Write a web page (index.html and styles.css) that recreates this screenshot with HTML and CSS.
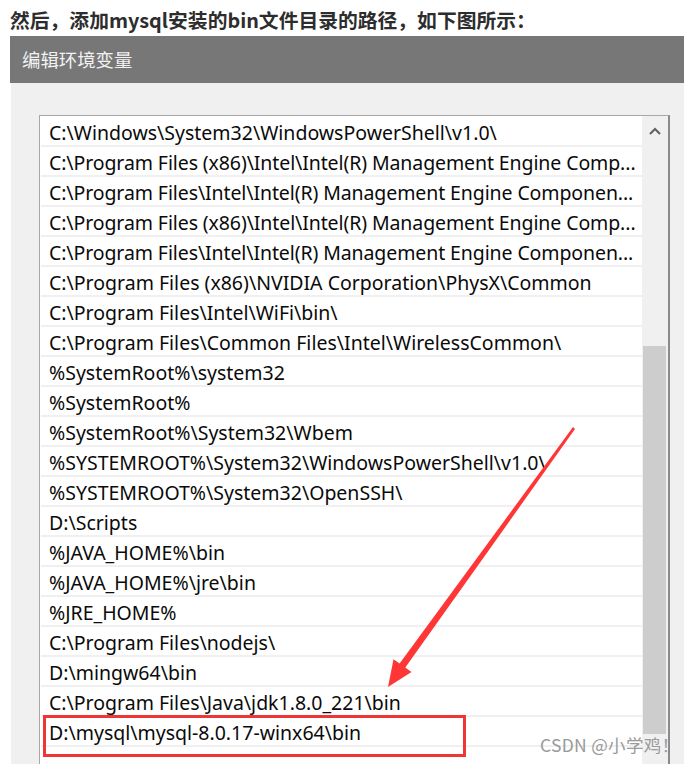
FILE: index.html
```html
<!DOCTYPE html>
<html lang="zh-CN">
<head>
<meta charset="utf-8">
<title>编辑环境变量</title>
<link rel="stylesheet" href="styles.css">
</head>
<body>
<div class="page">
  <p class="lead">然后，添加mysql安装的bin文件目录的路径，如下图所示：</p>
  <div class="dialog">
    <div class="titlebar">编辑环境变量</div>
    <div class="panel">
      <div class="listbox">
        <ul class="rows">
          <li>C:\Windows\System32\WindowsPowerShell\v1.0\</li>
          <li class="cut">C:\Program Files (x86)\Intel\Intel(R) Management Engine Comp...</li>
          <li class="cut">C:\Program Files\Intel\Intel(R) Management Engine Componen...</li>
          <li class="cut">C:\Program Files (x86)\Intel\Intel(R) Management Engine Comp...</li>
          <li class="cut">C:\Program Files\Intel\Intel(R) Management Engine Componen...</li>
          <li>C:\Program Files (x86)\NVIDIA Corporation\PhysX\Common</li>
          <li>C:\Program Files\Intel\WiFi\bin\</li>
          <li>C:\Program Files\Common Files\Intel\WirelessCommon\</li>
          <li>%SystemRoot%\system32</li>
          <li>%SystemRoot%</li>
          <li>%SystemRoot%\System32\Wbem</li>
          <li>%SYSTEMROOT%\System32\WindowsPowerShell\v1.0\</li>
          <li>%SYSTEMROOT%\System32\OpenSSH\</li>
          <li>D:\Scripts</li>
          <li>%JAVA_HOME%\bin</li>
          <li>%JAVA_HOME%\jre\bin</li>
          <li>%JRE_HOME%</li>
          <li>C:\Program Files\nodejs\</li>
          <li>D:\mingw64\bin</li>
          <li>C:\Program Files\Java\jdk1.8.0_221\bin</li>
          <li class="marked">D:\mysql\mysql-8.0.17-winx64\bin</li>
          <li></li>
        </ul>
        <div class="scrollbar">
          <div class="arrow-up">
            <svg width="12" height="8" viewBox="0 0 12 8"><path d="M1 7 L6 2 L11 7" fill="none" stroke="#606060" stroke-width="2"/></svg>
          </div>
          <div class="thumb"></div>
        </div>
      </div>
    </div>
  </div>
  <svg class="pointer" width="684" height="764" viewBox="0 0 684 764">
    <polygon points="573,427 575,429 405.3,667.6 411.5,672 388,687 393.5,659.2 399.6,663.6" fill="#ff3636"/>
  </svg>
  <div class="highlight"></div>
  <div class="watermark">CSDN @小学鸡！</div>
</div>
</body>
</html>
```
FILE: styles.css
```css
html, body {
  margin: 0;
  padding: 0;
  background: #ffffff;
  overflow: hidden;
}
.page {
  position: relative;
  width: 684px;
  height: 764px;
  overflow: hidden;
}
.lead {
  margin: 0;
  padding: 7px 0 0 10px;
  height: 29px;
  font-family: "Noto Sans CJK SC", "Noto Sans", sans-serif;
  font-weight: bold;
  font-size: 19.8px;
  line-height: 26px;
  color: #2d2d2d;
  white-space: nowrap;
}
.dialog {
  margin-left: 10px;
  width: 674px;
}
.titlebar {
  height: 47px;
  background: #777777;
  color: #f2f2f2;
  font-family: "Noto Sans CJK SC", sans-serif;
  font-size: 18.4px;
  line-height: 47px;
  padding-left: 12px;
}
.panel {
  background: #f0f0f0;
  margin-left: 1px;
  padding: 32px 15px 0 28px;
  height: 700px;
}
.listbox {
  display: flex;
  width: 628px;
  height: 680px;
  background: #ffffff;
  border-top: 1px solid #a8a8a8;
  border-left: 1px solid #a8a8a8;
  border-right: 2px solid #8a8a8a;
}
.rows {
  list-style: none;
  margin: 0;
  padding: 1px 0 0 1px;
  flex: 1;
  min-width: 0;
}
.rows li {
  height: 28px;
  border-bottom: 2px solid #f0f0f0;
  padding-left: 8px;
  font-family: "Noto Sans", "Open Sans", sans-serif;
  font-size: 19.5px;
  line-height: 31px;
  color: #0a0a0a;
  white-space: nowrap;
  overflow: hidden;
}
.rows li.cut {
  letter-spacing: -0.1px;
}
.scrollbar {
  width: 26px;
  flex: none;
  background: #f0f0f0;
  display: flex;
  flex-direction: column;
}
.arrow-up {
  height: 30px;
  display: flex;
  justify-content: center;
  align-items: center;
}
.thumb {
  margin-top: 200px;
  margin-left: 1px;
  width: 23px;
  height: 388px;
  background: #cdcdcd;
}
.pointer {
  position: absolute;
  left: 0;
  top: 0;
}
.highlight {
  position: absolute;
  left: 43px;
  top: 715px;
  width: 417px;
  height: 36px;
  border: 3px solid #f03535;
}
.watermark {
  position: absolute;
  left: 540px;
  top: 733px;
  font-family: "Noto Sans CJK SC", sans-serif;
  font-size: 17.5px;
  line-height: 24px;
  letter-spacing: 0.3px;
  color: #9a9a9a;
}
```
